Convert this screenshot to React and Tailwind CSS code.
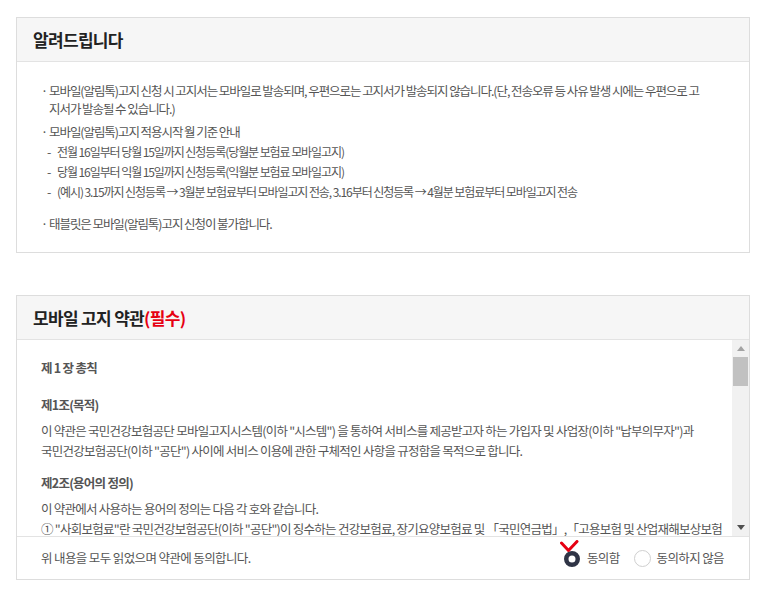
import React from "react";

const font = { fontFamily: '"Noto Sans CJK KR", "Noto Sans", sans-serif' };

function Bullet({ children, className = "" }) {
  return (
    <li className={"flex " + className}>
      <span className="w-[8px] shrink-0 text-[#555]">·</span>
      <span className="flex-1">{children}</span>
    </li>
  );
}

function Dash({ children }) {
  return (
    <li className="flex mt-[2px] pl-[6px]">
      <span className="w-[10px] shrink-0">-</span>
      <span className="flex-1 text-[12px] tracking-[-0.09em]">{children}</span>
    </li>
  );
}

export default function App() {
  return (
    <div className="bg-white w-[759px] h-[600px] pt-[17px] px-[16px] pr-[9px]" style={font}>
      <section className="border border-[#dddddd]">
        <div className="h-[44px] bg-[#f6f6f6] border-b border-[#e3e3e3] flex items-center pl-[16px]">
          <h2 className="text-[17px] font-bold text-[#222] tracking-[-0.04em]">알려드립니다</h2>
        </div>
        <ul className="pt-[20px] pb-[19px] pl-[24px] pr-[42px] text-[12.5px] leading-[18px] text-[#555] tracking-[-0.085em]">
          <Bullet>
            모바일(알림톡)고지 신청 시 고지서는 모바일로 발송되며, 우편으로는 고지서가 발송되지 않습니다.(단, 전송오류 등 사유 발생 시에는 우편으로 고지서가 발송될 수 있습니다.)
          </Bullet>
          <Bullet className="mt-[5px]">모바일(알림톡)고지 적용시작 월 기준 안내</Bullet>
          <Dash>전월 16일부터 당월 15일까지 신청등록(당월분 보험료 모바일고지)</Dash>
          <Dash>당월 16일부터 익월 15일까지 신청등록(익월분 보험료 모바일고지)</Dash>
          <Dash>(예시) 3.15까지 신청등록 → 3월분 보험료부터 모바일고지 전송, 3.16부터 신청등록 → 4월분 보험료부터 모바일고지 전송</Dash>
          <Bullet className="mt-[14px]">태블릿은 모바일(알림톡)고지 신청이 불가합니다.</Bullet>
        </ul>
      </section>

      <section className="mt-[42px] border border-[#dddddd]">
        <div className="h-[44px] bg-[#f6f6f6] border-b border-[#e3e3e3] flex items-center pl-[16px]">
          <h2 className="text-[17px] font-bold text-[#222] tracking-[-0.04em]">
            모바일 고지 약관<span className="text-[#e60012]">(필수)</span>
          </h2>
        </div>
        <div className="flex h-[196px]">
          <div className="flex-1 overflow-hidden pt-[19px] pl-[24px] pr-[8px] text-[12.5px] text-[#555] tracking-[-0.06em] break-keep">
            <p className="font-bold leading-[18px]">제 1 장 총칙</p>
            <p className="font-bold leading-[18px] mt-[19px]">제1조(목적)</p>
            <p className="mt-[7px] leading-[19.5px]">
              이 약관은 국민건강보험공단 모바일고지시스템(이하 "시스템") 을 통하여 서비스를 제공받고자 하는 가입자 및 사업장(이하 "납부의무자")과 국민건강보험공단(이하 "공단") 사이에 서비스 이용에 관한 구체적인 사항을 규정함을 목적으로 합니다.
            </p>
            <p className="font-bold leading-[18px] mt-[14px]">제2조(용어의 정의)</p>
            <p className="mt-[7px] leading-[19.5px]">
              이 약관에서 사용하는 용어의 정의는 다음 각 호와 같습니다.
              <br />
              ① "사회보험료"란 국민건강보험공단(이하 "공단")이 징수하는 건강보험료, 장기요양보험료 및 「국민연금법」,「고용보험 및 산업재해보상보험 의 보험료징수 등에 관한 법률」에 따른 연금보험료, 고용보험료, 산재보험료를 말합니다.
            </p>
          </div>
          <div className="w-[17px] bg-[#f1f1f1] flex flex-col items-center">
            <div className="h-[17px] w-full flex items-center justify-center">
              <svg width="8" height="5" viewBox="0 0 8 5"><path d="M4 0 L8 5 L0 5 Z" fill="#a3a3a3" /></svg>
            </div>
            <div className="w-[15px] h-[29px] bg-[#c1c1c1]" />
            <div className="flex-1" />
            <div className="h-[17px] w-full flex items-center justify-center">
              <svg width="8" height="5" viewBox="0 0 8 5"><path d="M0 0 L8 0 L4 5 Z" fill="#505050" /></svg>
            </div>
          </div>
        </div>
        <div className="h-[43px] border-t border-[#e3e3e3] flex items-center pl-[24px] pr-[25px] text-[12.5px] text-[#555] tracking-[-0.05em]">
          <span className="flex-1">위 내용을 모두 읽었으며 약관에 동의합니다.</span>
          <label className="flex items-center">
            <svg width="22" height="28" viewBox="0 0 22 28" className="-translate-y-[4px]">
              <circle cx="12" cy="19" r="5.75" fill="none" stroke="#2f3446" strokeWidth="4.5" />
              <path d="M1.5 3 L8.5 10.5 L17 1.5" fill="none" stroke="#e60012" strokeWidth="3" strokeLinecap="round" strokeLinejoin="round" />
            </svg>
            <span className="ml-[5px]">동의함</span>
          </label>
          <label className="flex items-center ml-[14px]">
            <span className="w-[17px] h-[17px] rounded-full border border-[#cfcfcf] bg-white" />
            <span className="ml-[6px]">동의하지 않음</span>
          </label>
        </div>
      </section>
    </div>
  );
}
